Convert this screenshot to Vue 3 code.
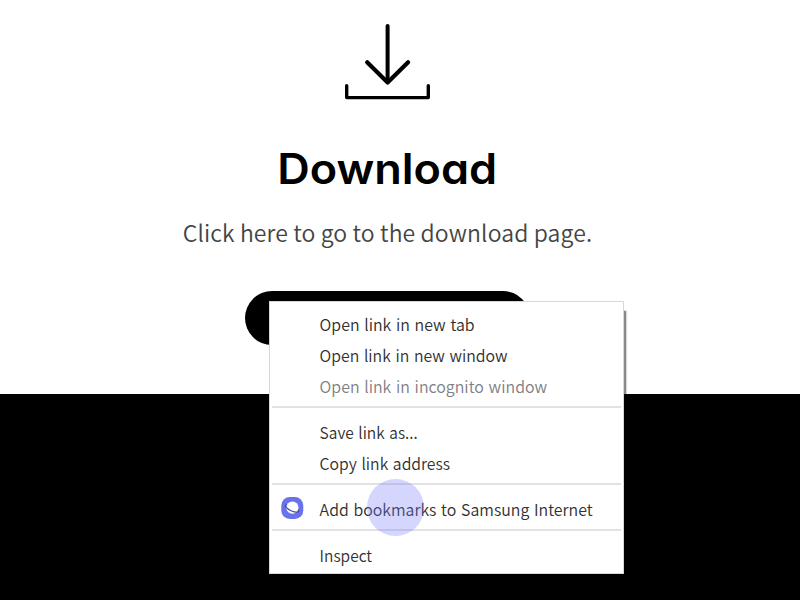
<script setup>
const groups = [
  [
    { label: 'Open link in new tab', width: 155 },
    { label: 'Open link in new window', width: 188 },
    { label: 'Open link in incognito window', width: 227.5, disabled: true },
  ],
  [
    { label: 'Save link as...', width: 98 },
    { label: 'Copy link address', width: 130.5 },
  ],
  [{ label: 'Add bookmarks to Samsung Internet', width: 273, icon: true }],
  [{ label: 'Inspect', width: 52.5 }],
]
</script>

<template>
  <main class="page">
    <section class="hero">
      <svg class="download-icon" width="90" height="80" viewBox="0 0 90 80" fill="none" stroke="#000" stroke-linecap="round">
        <path d="M44.6 4V60" stroke-width="4" />
        <path d="M24.2 40.2L44.6 60.5L65.1 40.2" stroke-width="4.2" stroke-linejoin="round" />
        <path d="M3.7 63.7V75.6H85.3V63.7" stroke-width="3.4" stroke-linejoin="round" />
      </svg>
      <h1 class="title">
        <svg width="219" height="50">
          <text x="-0.8" y="40" textLength="220" lengthAdjust="spacingAndGlyphs">Download</text>
        </svg>
      </h1>
      <p class="subtitle">Click here to go to the download page.</p>
      <div class="button"></div>
    </section>
    <footer class="footer"></footer>
    <div class="menu">
      <div v-for="(group, g) in groups" :key="g" class="group">
        <div v-for="item in group" :key="item.label" class="item" :class="{ disabled: item.disabled }">
          <span class="gutter">
            <svg v-if="item.icon" width="22" height="22" viewBox="0 0 22 22">
              <rect x="0.3" y="0" width="22" height="22" rx="8.5" fill="#6b72e9" />
              <circle cx="11.4" cy="10.6" r="6.1" fill="#fff" />
              <path d="M5.2 7.9C2.9 8.5 5.8 12 10.6 14C15.1 15.9 18.5 15.5 17.4 13.1" fill="none" stroke="#454eae" stroke-width="1.3" stroke-linecap="round" />
            </svg>
          </span>
          <svg class="label" :width="item.width + 4" height="31">
            <text x="0.6" y="21" :textLength="item.width" lengthAdjust="spacingAndGlyphs">{{ item.label }}</text>
          </svg>
        </div>
      </div>
      <span class="touch"></span>
    </div>
  </main>
</template>

<style>
body {
  margin: 0;
  background: #fff;
}
</style>

<style scoped>
.page {
  position: relative;
  isolation: isolate;
  width: 800px;
  height: 600px;
  overflow: hidden;
  display: flex;
  flex-direction: column;
  background: #fff;
  font-family: "Noto Sans CJK KR", "Noto Sans", sans-serif;
}
.hero {
  box-sizing: border-box;
  width: 775px;
  height: 394px;
  padding-top: 22px;
  display: flex;
  flex-direction: column;
  align-items: center;
}
.download-icon {
  display: block;
  flex: none;
}
.title {
  margin: 42px 0 0;
  height: 50px;
  font-family: Inter, sans-serif;
  font-size: 42px;
  font-weight: 600;
  font-feature-settings: "cv11";
  color: #000;
}
.title svg {
  display: block;
  overflow: visible;
}
.subtitle {
  margin: 20px 0 0;
  height: 36px;
  line-height: 36px;
  font-size: 23px;
  font-weight: 350;
  letter-spacing: 0.12px;
  color: #444;
  white-space: nowrap;
}
.button {
  flex: none;
  width: 285px;
  height: 54px;
  margin-top: 41px;
  border-radius: 27px;
  background: #000;
}
.footer {
  flex: 1;
  background: #000;
}
.menu {
  position: absolute;
  left: 269px;
  top: 301px;
  box-sizing: border-box;
  width: 355px;
  height: 273px;
  padding: 8px 2px 0;
  border: 1px solid #d6d6dc;
  background: #fff;
}
.menu::before {
  content: "";
  position: absolute;
  z-index: -1;
  left: 8px;
  top: 9px;
  width: 348px;
  height: 265px;
  background: #888;
  box-shadow: 0 0 2px #888;
}
.group + .group {
  margin-top: 3px;
  border-top: 2px solid #e1e1e6;
  padding-top: 10px;
}
.item {
  display: flex;
  height: 31px;
  color: #303030;
}
.item.disabled {
  color: #808084;
}
.gutter {
  display: flex;
  align-items: center;
  box-sizing: border-box;
  width: 47px;
  padding: 0 0 5px 9px;
}
.gutter svg {
  overflow: visible;
}
.label {
  display: block;
  overflow: visible;
  font-size: 16.5px;
  font-weight: 350;
  word-spacing: 1.2px;
  fill: currentColor;
}
.touch {
  position: absolute;
  left: 97px;
  top: 177px;
  width: 57px;
  height: 57px;
  border-radius: 50%;
  background: rgba(113, 119, 250, 0.3);
}
</style>
